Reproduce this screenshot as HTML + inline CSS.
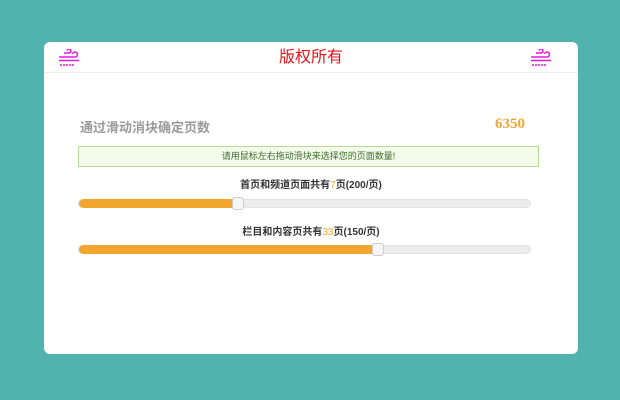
<!DOCTYPE html>
<html><head><meta charset="utf-8"><style>
*{margin:0;padding:0;box-sizing:border-box}
body{width:620px;height:400px;background:#50b3ae;font-family:"Liberation Sans","Noto Sans CJK SC",sans-serif;position:relative;overflow:hidden}
.card{position:absolute;left:44px;top:42px;width:534px;height:312px;background:#fff;border-radius:6px}
.hd{position:absolute;left:0;top:0;width:534px;height:31px;border-bottom:1px solid #eee;text-align:center;color:#e5141b;font-size:16px;line-height:31px}
.ic{position:absolute;top:7px}
.t{position:absolute;left:36px;top:75px;font-size:13px;font-weight:bold;color:#9a9a9a}
.n{position:absolute;left:451px;top:74px;font-size:15px;font-weight:bold;color:#f0a830;font-family:"Liberation Serif",serif}
.g{position:absolute;left:34px;top:104px;width:461px;height:21px;background:#f3fbea;border:1px solid #b7dc94;text-align:center;font-size:9px;line-height:19px;color:#3d6b2c}
.l{position:absolute;left:0;width:534px;text-align:center;font-size:10px;font-weight:bold;color:#333}
.l b{color:#f0a830;font-weight:normal}
.tr{position:absolute;left:34px;width:453px;height:9px;background:#ececec;border-radius:5px;border:1px solid #e2e2e2}
.f{position:absolute;left:0;top:-1px;height:9px;background:#f2a62d;border-radius:5px 0 0 5px}
.th{position:absolute;top:-3px;width:12px;height:13px;background:#f6f6f6;border:1px solid #ccc;border-radius:3px}
</style></head><body>
<div class="card">
<div class="hd">版权所有
<svg class="ic" style="left:14px" width="24" height="18" viewBox="0 0 24 18" fill="none" stroke="#e41ad6" stroke-width="1.5"><path d="M6 4h5a2 2 0 1 0-2-2.5"/><path d="M1 8h16a2.5 2.5 0 1 0-2.5-3"/><path d="M1 11.5h20"/><path d="M3 15v2M6 15v2M9 15v2M12 15v2M15 15v2"/></svg>
<svg class="ic" style="left:486px" width="24" height="18" viewBox="0 0 24 18" fill="none" stroke="#e41ad6" stroke-width="1.5"><path d="M6 4h5a2 2 0 1 0-2-2.5"/><path d="M1 8h16a2.5 2.5 0 1 0-2.5-3"/><path d="M1 11.5h20"/><path d="M3 15v2M6 15v2M9 15v2M12 15v2M15 15v2"/></svg>
</div>
<div class="t">通过滑动消块确定页数</div>
<div class="n">6350</div>
<div class="g">请用鼠标左右拖动滑块来选择您的页面数量!</div>
<div class="l" style="top:134px">首页和频道页面共有<b>7</b>页(200/页)</div>
<div class="tr" style="top:157px"><div class="f" style="width:159px"></div><div class="th" style="left:153px"></div></div>
<div class="l" style="top:181px">栏目和内容页共有<b>33</b>页(150/页)</div>
<div class="tr" style="top:203px"><div class="f" style="width:299px"></div><div class="th" style="left:293px"></div></div>
</div>
</body></html>
